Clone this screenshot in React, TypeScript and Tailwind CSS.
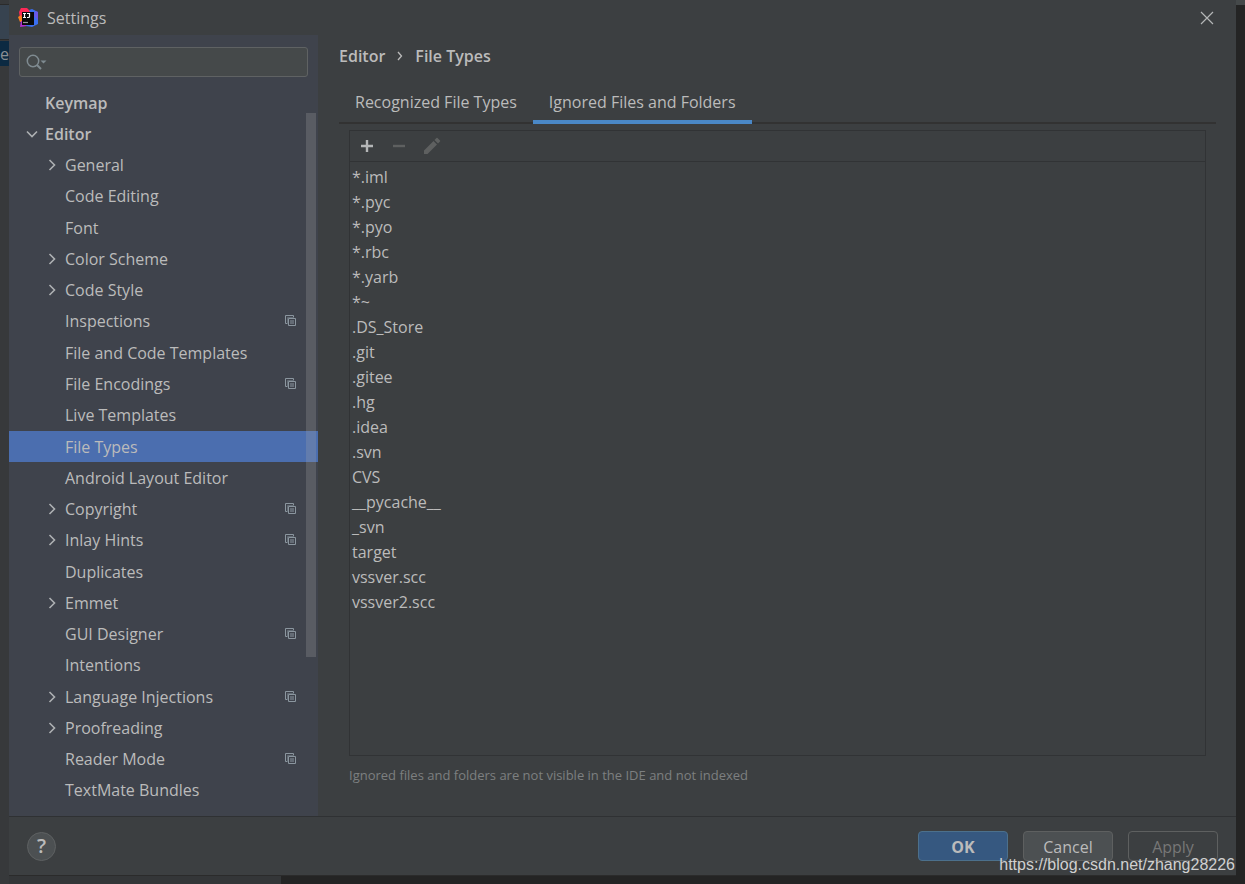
import { useState } from 'react';
import clsx from 'clsx';

interface TreeItem {
  label: string;
  root?: boolean;
  arrow?: 'open' | 'closed';
  scoped?: boolean;
}

const tree: TreeItem[] = [
  { label: 'Keymap', root: true },
  { label: 'Editor', root: true, arrow: 'open' },
  { label: 'General', arrow: 'closed' },
  { label: 'Code Editing' },
  { label: 'Font' },
  { label: 'Color Scheme', arrow: 'closed' },
  { label: 'Code Style', arrow: 'closed' },
  { label: 'Inspections', scoped: true },
  { label: 'File and Code Templates' },
  { label: 'File Encodings', scoped: true },
  { label: 'Live Templates' },
  { label: 'File Types' },
  { label: 'Android Layout Editor' },
  { label: 'Copyright', arrow: 'closed', scoped: true },
  { label: 'Inlay Hints', arrow: 'closed', scoped: true },
  { label: 'Duplicates' },
  { label: 'Emmet', arrow: 'closed' },
  { label: 'GUI Designer', scoped: true },
  { label: 'Intentions' },
  { label: 'Language Injections', arrow: 'closed', scoped: true },
  { label: 'Proofreading', arrow: 'closed' },
  { label: 'Reader Mode', scoped: true },
  { label: 'TextMate Bundles' },
];

const ignored = [
  '*.iml', '*.pyc', '*.pyo', '*.rbc', '*.yarb', '*~', '.DS_Store', '.git', '.gitee',
  '.hg', '.idea', '.svn', 'CVS', '__pycache__', '_svn', 'target', 'vssver.scc', 'vssver2.scc',
];

const tabs = ['Recognized File Types', 'Ignored Files and Folders'];

function Logo() {
  return (
    <svg className="size-5" viewBox="0 0 20 20">
      <path d="M3 0 H9 L13 4 L8 12 L2 10 L1 4 Z" fill="#fe2857" />
      <path d="M0 9 L3 7 L6 14 L2 14 Z" fill="#fc801d" />
      <path d="M2 19 L3 13 L10 14 L9 18 Z" fill="#b12fd0" />
      <path d="M11 2 L14 1 L20 4 L20 16 L14 19 L8 18 L12 4 Z" fill="#3b6ff0" />
      <path d="M17 3 L20 4 L20 12 L16 8 Z" fill="#6b57e8" />
      <path d="M4 4 H16 V17 H4 Z" fill="#0a0a0a" />
      <path d="M5 5.5 H8 M6.5 5.5 V9.5 M5 9.5 H8 M9 5.5 H11.5 V8.5 Q11.5 9.5 10.5 9.5 H9" fill="none" stroke="#fff" strokeWidth="1.2" />
      <path d="M5 14.5 H10" stroke="#999" strokeWidth="1.2" />
    </svg>
  );
}

function Arrow({ open }: { open: boolean }) {
  return (
    <svg className="size-4" viewBox="0 0 16 16" fill="none" stroke="#adb0b2" strokeWidth="1.6">
      <path d={open ? 'M3 5.5 L8 10.5 L13 5.5' : 'M5.5 3 L10.5 8 L5.5 13'} />
    </svg>
  );
}

function ScopeIcon() {
  return (
    <svg className="size-3" viewBox="0 0 12 12" fill="none" stroke="#8b969f">
      <path d="M2.5 8.5 H0.5 V0.5 H8.5 V2.5" />
      <path d="M2.5 9 V2.5 H9" stroke="#626b74" />
      <path d="M3.5 3.5 H10.5 V10.5 H3.5 Z" />
      <path d="M5 6 H9 M5 8 H9" />
    </svg>
  );
}

export default function App() {
  const [selected, setSelected] = useState('File Types');
  const [tab, setTab] = useState(tabs[1]);
  const [query, setQuery] = useState('');

  return (
    <div className="relative flex h-screen min-h-[860px] overflow-hidden bg-[#242424] font-['Open_Sans',sans-serif] text-base/6 text-[#bbbbbb]">
      {/* Strip of the IDE window behind the dialog */}
      <div className="flex w-[9px] shrink-0 flex-col overflow-hidden bg-[#37393b]">
        <div className="h-[5px] border-b border-[#2b2b2b]" />
        <div className="h-[35px] border-b border-[#2b2b2b] bg-[#374350]" />
        <div className="mt-px flex h-[25px] items-center justify-end bg-[#0c2a42] text-[#8a8f94]">ce</div>
      </div>

      <div className="flex min-w-0 flex-1 flex-col">
        <div className="flex min-h-0 flex-1 flex-col border-b border-[#2b2b2b] bg-[#3c3f41]">
          <header className="flex h-[35px] shrink-0 items-center justify-between pr-[22px] pl-[9px]">
            <div className="flex items-center gap-[9px]">
              <Logo />
              <h1>Settings</h1>
            </div>
            <button aria-label="Close">
              <svg className="size-[14px]" viewBox="0 0 14 14" stroke="#b4b6b7" strokeWidth="1.2">
                <path d="M1 1 L13 13 M13 1 L1 13" />
              </svg>
            </button>
          </header>

          <div className="flex min-h-0 flex-1">
            <aside className="flex w-[309px] shrink-0 flex-col bg-[#3f434c] pt-3 pb-[10px]">
              <label className="mr-[10px] ml-[10px] flex h-[30px] shrink-0 items-center rounded-[3px] border border-[#5f6263] bg-[#45494a] px-[6px]">
                <svg className="h-4 w-[22px]" viewBox="0 0 22 16" fill="none" stroke="#7f8b91" strokeWidth="1.5">
                  <circle cx="7" cy="7" r="5.7" />
                  <path d="M11 11 L15 15" strokeWidth="2" />
                  <path d="M14.5 6.5 H20.5 L17.5 9.5 Z" fill="#7f8b91" stroke="none" />
                </svg>
                <input
                  aria-label="Search settings"
                  value={query}
                  onChange={(e) => setQuery(e.target.value)}
                  className="min-w-0 flex-1 bg-transparent outline-none"
                />
              </label>

              <nav className="relative mt-[10px] flex min-h-0 flex-1 flex-col">
                {tree.map((item) => (
                  <button
                    key={item.label}
                    onClick={() => setSelected(item.label)}
                    className={clsx(
                      'flex min-h-0 flex-1 items-center gap-[5px] pr-[21px] text-left',
                      item.root ? 'pl-[15px] font-semibold' : 'pl-[35px]',
                      selected === item.label && 'bg-[#4b6eaf]',
                    )}
                  >
                    <span className="w-4 shrink-0">{item.arrow && <Arrow open={item.arrow === 'open'} />}</span>
                    <span className="flex-1">{item.label}</span>
                    {item.scoped && <ScopeIcon />}
                  </button>
                ))}
                <div className="absolute top-[26px] right-[2px] h-[544px] w-[10px] bg-[#a6a6a6]/25" />
              </nav>
            </aside>

            <main className="flex min-w-0 flex-1 flex-col pr-5 pl-[21px]">
              <div className="mt-[9px] flex shrink-0 items-center font-semibold">
                <span>Editor</span>
                <svg className="mx-3 h-[10px] w-[6px]" viewBox="0 0 6 10" fill="none" stroke="#bbbbbb" strokeWidth="1.3">
                  <path d="M1 1 L4.5 5 L1 9" />
                </svg>
                <span>File Types</span>
              </div>

              <div role="tablist" className="relative mt-[13px] flex h-[43px] shrink-0">
                <div className="absolute inset-x-0 bottom-0 h-[2px] bg-[#323232]" />
                {tabs.map((name) => (
                  <button
                    key={name}
                    role="tab"
                    aria-selected={tab === name}
                    onClick={() => setTab(name)}
                    className={clsx(
                      'relative border-b-4 px-4 pt-[2px]',
                      tab === name ? 'border-[#4a88c7]' : 'border-transparent',
                    )}
                  >
                    {name}
                  </button>
                ))}
              </div>

              <div className="mx-[10px] mt-[6px] flex min-h-0 flex-1 flex-col border border-[#313335]">
                <div className="flex h-[31px] shrink-0 items-center gap-4 border-b border-[#313335] pl-[9px]">
                  <button aria-label="Add">
                    <svg className="size-4" viewBox="0 0 16 16" stroke="#b4b6b7" strokeWidth="2.4">
                      <path d="M8 2 V14 M2 8 H14" />
                    </svg>
                  </button>
                  <button aria-label="Remove" disabled>
                    <svg className="size-4" viewBox="0 0 16 16" stroke="#5e6060" strokeWidth="2.4">
                      <path d="M2 8 H14" />
                    </svg>
                  </button>
                  <button aria-label="Edit" disabled>
                    <svg className="size-[18px]" viewBox="0 0 18 18" fill="#5e6060">
                      <path d="M1 17 V13.5 L10.5 4 L14 7.5 L4.5 17 Z M11.5 3 L13.5 1 Q14 0.5 14.5 1 L17 3.5 Q17.5 4 17 4.5 L15 6.5 Z" />
                    </svg>
                  </button>
                </div>
                <ul className="pt-[3px] pl-[2px]">
                  {ignored.map((pattern) => (
                    <li key={pattern} className="h-[25px] leading-[25px]">{pattern}</li>
                  ))}
                </ul>
              </div>

              <p className="mt-2 mb-[30px] ml-[10px] shrink-0 text-[13px]/[22px] text-[#7d7f80]">
                Ignored files and folders are not visible in the IDE and not indexed
              </p>
            </main>
          </div>

          <footer className="flex h-[59px] shrink-0 items-center justify-between border-t border-[#2f3133] pr-[18px] pl-[18px]">
            <button
              aria-label="Help"
              className="flex size-[29px] items-center justify-center rounded-full border border-[#5e6162] bg-[#4c5052] text-xl/6 font-semibold"
            >
              ?
            </button>
            <div className="flex gap-[15px]">
              <button className="h-[30px] w-[90px] rounded-[4px] border border-[#4c708c] bg-[#365880] pt-[2px] font-bold">OK</button>
              <button className="h-[30px] w-[90px] rounded-[4px] border border-[#5e6060] bg-[#4c5052] pt-[2px]">Cancel</button>
              <button disabled className="h-[30px] w-[90px] rounded-[4px] border border-[#5e6060] pt-[2px] text-[#777777]">Apply</button>
            </div>
          </footer>
        </div>
        <div className="h-2 w-[272px] shrink-0 bg-[#343638]" />
      </div>

      <div className="w-[9px] shrink-0">
        <div className="h-[5px] bg-[#45494a]" />
      </div>

      <a
        href="https://blog.csdn.net/zhang28226"
        className="absolute right-[10px] bottom-[7px] font-['Liberation_Sans',sans-serif] text-[#d0d0d0]"
      >
        https://blog.csdn.net/zhang28226
      </a>
    </div>
  );
}
